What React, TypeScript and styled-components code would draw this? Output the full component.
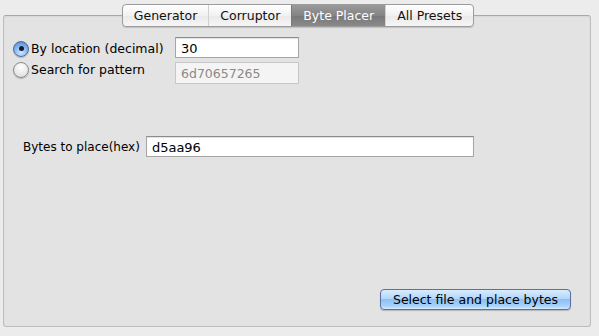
import React from 'react'
import styled, { createGlobalStyle, css } from 'styled-components'

const GlobalStyle = createGlobalStyle`
    html, body {
        margin: 0;
        padding: 0;
        background: #ececec;
        font-family: "Lucida Grande", "DejaVu Sans", sans-serif;
        font-size: 12px;
        color: #000;
    }
`

const tabs = ['Generator', 'Corruptor', 'Byte Placer', 'All Presets']
const activeTab = 'Byte Placer'

const App: React.FC = () => {
    return (
        <Window>
            <GlobalStyle />
            <TabBar>
                {tabs.map(t => (
                    <Tab key={t} active={t === activeTab}>{t}</Tab>
                ))}
            </TabBar>

            <Panel>
                <OptionGrid>
                    <RadioColumn>
                        <RadioLabel>
                            <Radio checked />
                            By location (decimal)
                        </RadioLabel>
                        <RadioLabel>
                            <Radio />
                            Search for pattern
                        </RadioLabel>
                    </RadioColumn>
                    <FieldColumn>
                        <Field>30</Field>
                        <Field disabled>6d70657265</Field>
                    </FieldColumn>
                </OptionGrid>

                <BytesRow>
                    <span>Bytes to place(hex)</span>
                    <Field wide>d5aa96</Field>
                </BytesRow>

                <Footer>
                    <AquaButton>Select file and place bytes</AquaButton>
                </Footer>
            </Panel>
        </Window>
    )
}

const Window = styled.div`
    width: 599px;
    height: 336px;
    padding: 4px 8px 0 3px;
    box-sizing: border-box;
    display: flex;
    flex-direction: column;
`

const TabBar = styled.div`
    position: relative;
    z-index: 1;
    display: flex;
    align-self: center;
    margin-left: 2px;
    height: 21px;
    border: 1px solid #9c9c9c;
    border-radius: 4px;
    overflow: hidden;
    box-shadow: 0 1px 1px rgba(0, 0, 0, 0.15);
    background: linear-gradient(#ffffff, #f1f1f1 50%, #e9e9e9 51%, #f6f6f6);
`

const Tab = styled.div<{ active?: boolean }>`
    display: flex;
    align-items: center;
    padding: 0 11px;
    font-size: 12.5px;
    color: #111;
    & + & {
        border-left: 1px solid #d0d0d0;
    }
    ${p => p.active && css`
        color: #fff;
        background: linear-gradient(#9a9a9a, #848484 50%, #777 51%, #8a8a8a);
        border-left-color: #7a7a7a !important;
        & + div {
            border-left-color: #7a7a7a;
        }
    `}
`

const Panel = styled.div`
    flex: 1;
    margin: -12px 0 9px 0;
    padding: 21px 10px 16px 9px;
    background: #e3e3e3;
    border: 1px solid #bdbdbd;
    border-top-color: #a8a8a8;
    border-radius: 3px;
    box-shadow: inset 0 1px 2px rgba(0, 0, 0, 0.06);
    display: flex;
    flex-direction: column;
`

const OptionGrid = styled.div`
    display: grid;
    grid-template-columns: 162px 124px;
    align-items: start;
`

const RadioColumn = styled.div`
    display: flex;
    flex-direction: column;
    padding-top: 1px;
`

const FieldColumn = styled.div`
    display: flex;
    flex-direction: column;
    gap: 4px;
`

const RadioLabel = styled.label`
    display: flex;
    align-items: center;
    gap: 2px;
    height: 21px;
    font-size: 12.5px;
    white-space: nowrap;
`

const Radio = styled.span<{ checked?: boolean }>`
    width: 16px;
    height: 16px;
    border-radius: 50%;
    box-sizing: border-box;
    border: 1px solid #8a8a8a;
    background: radial-gradient(circle at 50% 30%, #ffffff, #e4e4e4 70%, #cfcfcf);
    box-shadow: 0 1px 1px rgba(0, 0, 0, 0.2);
    display: flex;
    align-items: center;
    justify-content: center;
    ${p => p.checked && css`
        border-color: #4f6d9c;
        background: radial-gradient(circle at 50% 75%, #cfe8ff, #8cbcf0 45%, #5a95dc 80%, #4a82c8);
        &::after {
            content: '';
            width: 5px;
            height: 5px;
            border-radius: 50%;
            background: #1a1a2a;
        }
    `}
`

const Field = styled.div<{ disabled?: boolean; wide?: boolean }>`
    box-sizing: border-box;
    width: ${p => (p.wide ? '328px' : '124px')};
    height: 21px;
    padding: 2px 5px 0;
    background: #fff;
    border: 1px solid #a6a6a6;
    border-top-color: #8c8c8c;
    box-shadow: inset 0 1px 1px rgba(0, 0, 0, 0.12);
    font-size: 13px;
    line-height: 17px;
    ${p => p.disabled && css`
        background: #f4f4f4;
        border-color: #c8c8c8;
        box-shadow: none;
        color: #8a8a8a;
        font-size: 12.5px;
        height: 22px;
    `}
`

const BytesRow = styled.div`
    display: flex;
    align-items: center;
    gap: 6px;
    margin-top: 52px;
    padding-left: 10px;
    font-size: 12px;
`

const Footer = styled.div`
    margin-top: auto;
    display: flex;
    justify-content: flex-end;
`

const AquaButton = styled.button`
    width: 191px;
    height: 21px;
    margin-right: 9px;
    padding: 0;
    border: 1px solid #5c6f9e;
    border-radius: 4px;
    font-family: inherit;
    font-size: 12.5px;
    color: #000;
    background: linear-gradient(#d8ecfe, #b3d6fb 45%, #8cbff5 50%, #a9d4fb 85%, #d2ecff);
    box-shadow: 0 1px 1px rgba(0, 0, 0, 0.2);
`

export default App
